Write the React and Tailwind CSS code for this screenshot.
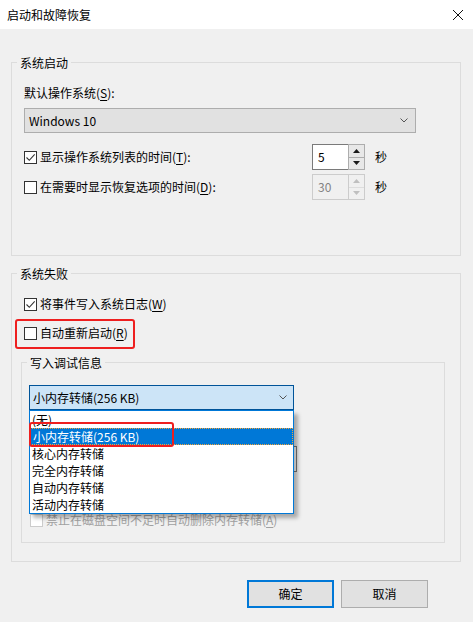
import React from "react";

const FONT = "font-['Noto_Sans_CJK_SC',sans-serif]";

function Checkbox({ checked, disabled }) {
  return (
    <span
      className={`w-[13px] h-[13px] shrink-0 flex items-center justify-center border bg-white ${
        disabled ? "border-[#cccccc]" : "border-[#333333]"
      }`}
    >
      {checked && (
        <svg width="11" height="11" viewBox="0 0 11 11" fill="none">
          <path d="M1.5 5.5l2.8 2.8 5.4-6" stroke="#333" strokeWidth="1.1" />
        </svg>
      )}
    </span>
  );
}

function Chevron() {
  return (
    <svg width="8" height="5" viewBox="0 0 8 5" fill="none">
      <path d="M0.5 0.5l3.5 3.5 3.5-3.5" stroke="#555" strokeWidth="1" />
    </svg>
  );
}

function Arrow({ up, color }) {
  return (
    <svg width="7" height="4" viewBox="0 0 7 4">
      <path d={up ? "M0 4h7L3.5 0z" : "M0 0h7L3.5 4z"} fill={color} />
    </svg>
  );
}

function SpinBox({ value, disabled }) {
  const arrow = disabled ? "#bfbfbf" : "#1a1a1a";
  return (
    <div className="flex h-[26px] w-[53px]">
      <div
        className={`flex-1 flex items-center pl-[5px] border border-r-0 ${
          disabled ? "border-[#cccccc] bg-[#f0f0f0] text-[#838383]" : "border-[#7a7a7a] bg-white text-black"
        }`}
      >
        {value}
      </div>
      <div
        className={`w-[17px] flex flex-col border ${
          disabled ? "border-[#cccccc] bg-[#f0f0f0]" : "border-[#adadad] bg-[#e8e8e8]"
        }`}
      >
        <div
          className={`flex-1 flex items-center justify-center border-b ${
            disabled ? "border-[#dddddd]" : "border-[#adadad]"
          }`}
        >
          <Arrow up color={arrow} />
        </div>
        <div className="flex-1 flex items-center justify-center">
          <Arrow color={arrow} />
        </div>
      </div>
    </div>
  );
}

function GroupLabel({ children }) {
  return (
    <span className="absolute -top-[8px] left-[5px] px-[3px] bg-[#f0f0f0] leading-[16px]">
      {children}
    </span>
  );
}

const dumpOptions = ["(无)", "小内存转储(256 KB)", "核心内存转储", "完全内存转储", "自动内存转储", "活动内存转储"];

export default function App() {
  return (
    <div className={`w-[473px] h-[622px] bg-[#f0f0f0] flex flex-col text-[12px] leading-[16px] text-black ${FONT}`}>
      {/* Title bar */}
      <div className="h-[29px] bg-white flex items-center justify-between pl-[7px] pr-[10px] shrink-0">
        <span>启动和故障恢复</span>
        <svg width="10" height="10" viewBox="0 0 10 10" fill="none">
          <path d="M0 0l10 10M10 0L0 10" stroke="#111" strokeWidth="1" />
        </svg>
      </div>

      {/* 系统启动 */}
      <div className="relative mt-[33px] ml-[11px] w-[450px] h-[194px] border border-[#dcdcdc] pl-[12px] pt-[22px] shrink-0">
        <GroupLabel>系统启动</GroupLabel>
        <div className="h-[16px]">
          默认操作系统(<span className="underline underline-offset-2">S</span>):
        </div>
        <div className="mt-[7px] w-[392px] h-[25px] border border-[#adadad] bg-[#e1e1e1] flex items-center justify-between pl-[4px] pr-[7px]">
          <span>Windows 10</span>
          <Chevron />
        </div>
        <div className="mt-[11px] h-[26px] flex items-center">
          <label className="w-[288px] flex items-center gap-[3px]">
            <Checkbox checked />
            <span>
              显示操作系统列表的时间(<span className="underline underline-offset-2">T</span>):
            </span>
          </label>
          <SpinBox value="5" />
          <span className="ml-[10px]">秒</span>
        </div>
        <div className="mt-[4px] h-[26px] flex items-center">
          <label className="w-[288px] flex items-center gap-[3px]">
            <Checkbox />
            <span>
              在需要时显示恢复选项的时间(<span className="underline underline-offset-2">D</span>):
            </span>
          </label>
          <SpinBox value="30" disabled />
          <span className="ml-[10px]">秒</span>
        </div>
      </div>

      {/* 系统失败 */}
      <div className="relative mt-[17px] ml-[11px] w-[450px] h-[289px] border border-[#dcdcdc] pl-[12px] pt-[22px] shrink-0">
        <GroupLabel>系统失败</GroupLabel>
        <label className="h-[16px] flex items-center gap-[3px]">
          <Checkbox checked />
          <span>
            将事件写入系统日志(<span className="underline underline-offset-2">W</span>)
          </span>
        </label>
        <div className="mt-[7px] -ml-[9px] w-[120px] h-[30px] border-2 border-[#ee1f1f] rounded-[3px] pl-[7px] pt-[4px]">
          <label className="h-[16px] flex items-center gap-[3px]">
            <Checkbox />
            <span>
              自动重新启动(<span className="underline underline-offset-2">R</span>)
            </span>
          </label>
        </div>

        {/* 写入调试信息 */}
        <div className="relative mt-[13px] -ml-[3px] w-[424px] h-[181px] border border-[#dcdcdc] pl-[7px] pt-[22px]">
          <GroupLabel>写入调试信息</GroupLabel>
          <div className="relative w-[265px]">
            <div className="h-[25px] border border-[#005499] bg-[#cce4f7] flex items-center justify-between pl-[3px] pr-[6px]">
              <span>小内存转储(256 KB)</span>
              <Chevron />
            </div>
            {/* open list */}
            <div className="absolute top-full left-0 w-[265px] z-10 bg-white border border-[#0078d7] shadow-[4px_4px_4px_rgba(0,0,0,0.3)]">
              {dumpOptions.map((opt, i) => (
                <div
                  key={opt}
                  className={
                    i === 1
                      ? "h-[17px] pl-[2px] flex items-center bg-[#0078d7] text-white border border-dotted border-[#f3a438]"
                      : "h-[17px] pl-[2px] flex items-center"
                  }
                >
                  {opt}
                </div>
              ))}
              <div className="absolute -left-[1px] top-[11px] w-[145px] h-[25px] border-2 border-[#ee1f1f] rounded-[3px]" />
            </div>
          </div>
          {/* fields hidden under the open list */}
          <div className="mt-[12px] h-[16px]" />
          <div className="mt-[8px] w-[268px] h-[26px] border border-[#7a7a7a] bg-white" />
          <div className="mt-[10px] h-[16px]" />
          <label className="mt-[14px] ml-[1px] h-[16px] flex items-center gap-[3px]">
            <Checkbox disabled />
            <span className="text-[#a0a0a0]">
              禁止在磁盘空间不足时自动删除内存转储(<span className="underline underline-offset-2">A</span>)
            </span>
          </label>
        </div>
      </div>

      {/* Buttons */}
      <div className="mt-[18px] flex justify-end gap-[7px] pr-[45px]">
        <button className="w-[87px] h-[28px] border-2 border-[#0078d7] bg-[#e1e1e1]">确定</button>
        <button className="w-[87px] h-[28px] border border-[#adadad] bg-[#e1e1e1]">取消</button>
      </div>
    </div>
  );
}
